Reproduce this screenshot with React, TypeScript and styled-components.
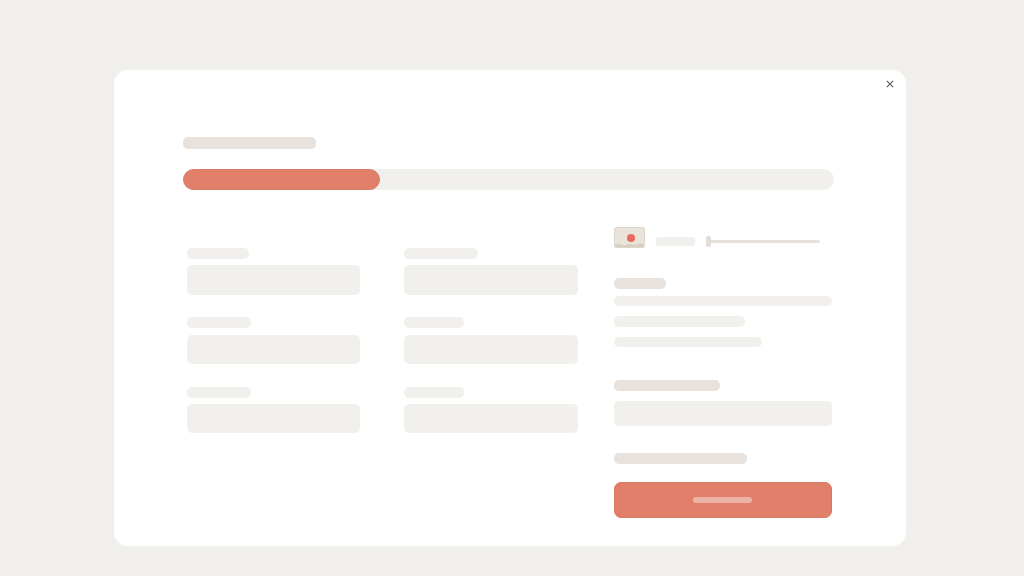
import styled, { createGlobalStyle } from 'styled-components';

const GlobalStyle = createGlobalStyle`
  html, body {
    margin: 0;
    padding: 0;
    background: #f0efeb;
    font-family: "Liberation Sans", Arial, sans-serif;
  }
`;

const Page = styled.main`
  box-sizing: border-box;
  width: 1024px;
  height: 576px;
  padding: 70px 118px 30px 114px;
  overflow: hidden;
`;

const Card = styled.section`
  position: relative;
  box-sizing: border-box;
  width: 792px;
  height: 476px;
  padding: 67px 72px 0 69px;
  background: #fff;
  border-radius: 14px;
`;

const CloseButton = styled.button`
  position: absolute;
  top: 8px;
  right: 10px;
  width: 12px;
  height: 12px;
  padding: 0;
  display: flex;
  align-items: center;
  justify-content: center;
  border: 0;
  background: none;
  color: #5c5f60;
`;

const Bar = styled.div<{ $w: number; $h?: number; $warm?: boolean }>`
  width: ${({ $w }) => $w}px;
  height: ${({ $h }) => $h ?? 11}px;
  flex: none;
  border-radius: 5px;
  background: ${({ $warm }) => ($warm ? '#e9e2dc' : '#f1f0ec')};
`;

const Title = styled(Bar)`
  height: 12px;
  margin-bottom: 20px;
`;

const ProgressTrack = styled.div`
  width: 651px;
  height: 21px;
  border-radius: 11px;
  background: #f1f0ec;
`;

const ProgressFill = styled.div`
  box-sizing: border-box;
  width: 197px;
  height: 100%;
  border: 1px solid #d97864;
  border-radius: 11px;
  background: #e27f6b;
`;

const Body = styled.div`
  display: grid;
  grid-template-columns: 173px 174px 218px;
  column-gap: 44px;
  margin-left: 4px;
`;

const FormColumn = styled.div`
  display: flex;
  flex-direction: column;
  padding-top: 58px;
`;

const Field = styled.div<{ $gap: number; $after: number }>`
  display: flex;
  flex-direction: column;
  gap: ${({ $gap }) => $gap}px;
  margin-bottom: ${({ $after }) => $after}px;
`;

const Input = styled.div<{ $h: number }>`
  width: 100%;
  height: ${({ $h }) => $h}px;
  border-radius: 5px;
  background: #f1f0ec;
`;

const Side = styled.div`
  display: flex;
  flex-direction: column;
  width: 218px;
  margin-left: -8px;
  padding-top: 37px;
`;

const MediaRow = styled.div`
  display: flex;
  align-items: center;
  height: 21px;
  margin-bottom: 30px;
`;

const Thumb = styled.svg`
  width: 31px;
  height: 21px;
  flex: none;
  margin-right: 11px;
`;

const Chip = styled(Bar)`
  height: 9px;
  margin: 8px 11px 0 0;
  border-radius: 3px;
`;

const Slider = styled.div`
  position: relative;
  width: 114px;
  height: 3px;
  margin-top: 7px;
  border-radius: 2px;
  background: #e6e2da;
`;

const SliderHandle = styled.span`
  position: absolute;
  left: 0;
  top: -4px;
  width: 5px;
  height: 11px;
  border-radius: 2px;
  background: #e2ddd5;
`;

const TextBlock = styled.div`
  display: flex;
  flex-direction: column;
  gap: 10px;
  margin-bottom: 33px;
`;

const BlockHead = styled(Bar)`
  margin-bottom: -3px;
`;

const SideField = styled.div`
  display: flex;
  flex-direction: column;
  gap: 10px;
  margin-bottom: 27px;
`;

const SubmitLabel = styled(Bar)`
  margin-bottom: 18px;
`;

const Submit = styled.button`
  box-sizing: border-box;
  display: flex;
  align-items: center;
  justify-content: center;
  width: 218px;
  height: 36px;
  padding: 0 2px 0 0;
  border: 1px solid #d97864;
  border-radius: 7px;
  background: #e27f6b;
`;

const SubmitText = styled.span`
  display: block;
  width: 59px;
  height: 6px;
  border-radius: 3px;
  background: #ecb3a6;
`;

const rows = [
  { gap: 6, h: 30, after: 22 },
  { gap: 7, h: 29, after: 23 },
  { gap: 6, h: 29, after: 0 },
];

const columns = [
  [62, 64, 64],
  [74, 60, 60],
];

export default function App() {
  return (
    <>
      <GlobalStyle />
      <Page>
        <Card>
          <CloseButton aria-label="Close">
            <svg width="8" height="8" viewBox="0 0 8 8" fill="none" stroke="currentColor" strokeWidth="1.2">
              <path d="M.8.8l6.4 6.4M7.2.8L.8 7.2" />
            </svg>
          </CloseButton>
          <Title $w={133} $warm />
          <ProgressTrack>
            <ProgressFill />
          </ProgressTrack>
          <Body>
            {columns.map((labels, i) => (
              <FormColumn key={i}>
                {labels.map((w, j) => (
                  <Field key={j} $gap={rows[j].gap} $after={rows[j].after}>
                    <Bar $w={w} />
                    <Input $h={rows[j].h} />
                  </Field>
                ))}
              </FormColumn>
            ))}
            <Side>
              <MediaRow>
                <Thumb viewBox="0 0 31 21">
                  <rect x="0.5" y="0.5" width="30" height="20" rx="2" fill="#e9e3da" stroke="#dcd5ca" />
                  <path d="M1 18c3-2 5-1 8 0s5-2 8-1 5 1 7 0 4-1 6 1v1a1 1 0 0 1-1 1H2a1 1 0 0 1-1-1z" fill="#d8d1c3" />
                  <circle cx="17" cy="11" r="4" fill="#e8695f" />
                </Thumb>
                <Chip $w={39} />
                <Slider>
                  <SliderHandle />
                </Slider>
              </MediaRow>
              <TextBlock>
                <BlockHead $w={52} $warm />
                <Bar $w={218} $h={10} />
                <Bar $w={131} $h={11} />
                <Bar $w={148} $h={10} />
              </TextBlock>
              <SideField>
                <Bar $w={106} $warm />
                <Input $h={25} />
              </SideField>
              <SubmitLabel $w={133} $warm />
              <Submit aria-label="Submit">
                <SubmitText />
              </Submit>
            </Side>
          </Body>
        </Card>
      </Page>
    </>
  );
}
